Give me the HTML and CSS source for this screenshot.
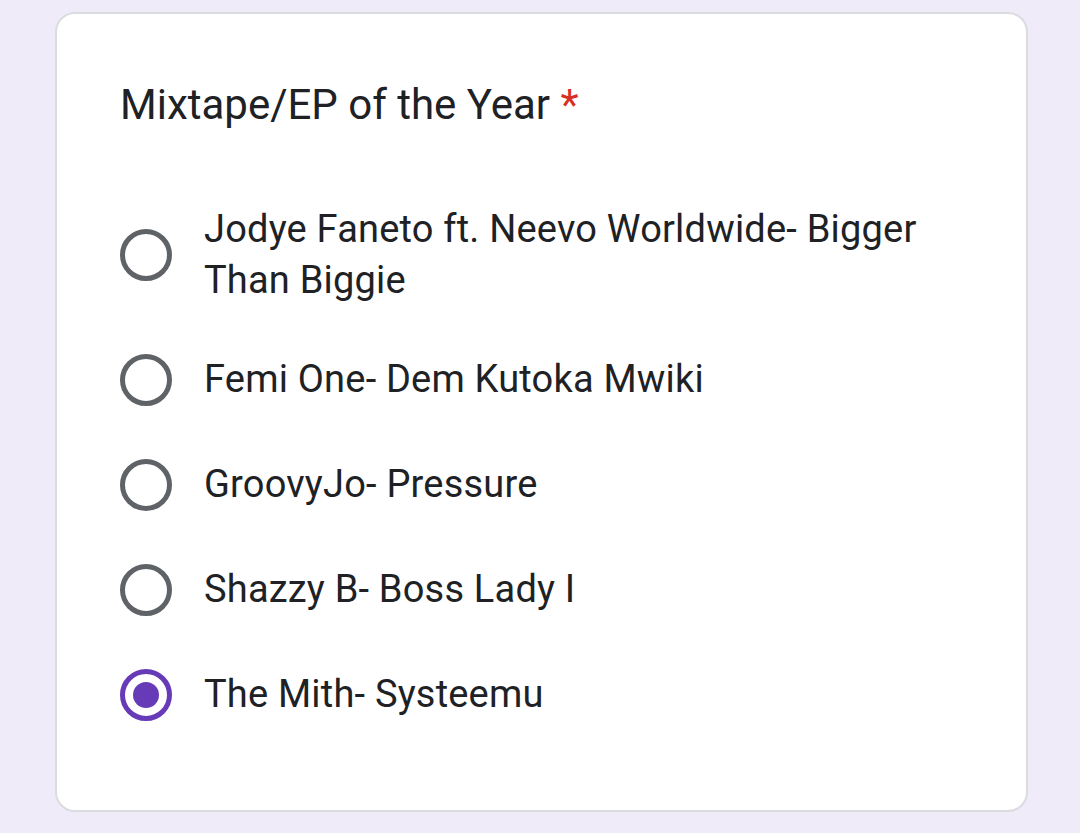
FILE: index.html
```html
<!DOCTYPE html>
<html>
<head>
<meta charset="utf-8">
<link rel="stylesheet" href="styles.css">
</head>
<body>
<div class="card">
  <div class="title">Mixtape/EP of the Year <span class="req">*</span></div>
  <div class="options">
    <div class="opt"><span class="radio"></span><span class="label">Jodye Faneto ft. Neevo Worldwide- Bigger Than Biggie</span></div>
    <div class="opt"><span class="radio"></span><span class="label">Femi One- Dem Kutoka Mwiki</span></div>
    <div class="opt"><span class="radio"></span><span class="label">GroovyJo- Pressure</span></div>
    <div class="opt"><span class="radio"></span><span class="label">Shazzy B- Boss Lady I</span></div>
    <div class="opt"><span class="radio checked"></span><span class="label">The Mith- Systeemu</span></div>
  </div>
</div>
</body>
</html>
```
FILE: styles.css
```css
html, body { margin: 0; padding: 0; }
body {
  background: #efebf8;
  font-family: Roboto, "Noto Sans", sans-serif;
  color: #202124;
  width: 1080px;
  height: 833px;
  overflow: hidden;
}
.card {
  box-sizing: border-box;
  margin: 12px 0 0 55px;
  width: 973px;
  height: 800px;
  background: #fff;
  border: 2px solid #dadce0;
  border-radius: 20px;
  padding: 66px 60px 0 63px;
}
.title {
  font-size: 42px;
  line-height: 50px;
}
.req { color: #d93025; }
.options {
  margin-top: 74px;
  display: flex;
  flex-direction: column;
  gap: 42px;
}
.opt {
  display: flex;
  align-items: center;
  min-height: 63px;
}
.radio {
  flex: none;
  box-sizing: border-box;
  width: 52px;
  height: 52px;
  border: 5px solid #5f6368;
  border-radius: 50%;
  margin-right: 32px;
  position: relative;
}
.radio.checked { border-color: #673ab7; }
.radio.checked::after {
  content: "";
  position: absolute;
  left: 8px; top: 8px;
  width: 26px; height: 26px;
  border-radius: 50%;
  background: #673ab7;
}
.label {
  font-size: 38px;
  line-height: 51px;
  letter-spacing: 0.2px;
  width: 740px;
}
```
